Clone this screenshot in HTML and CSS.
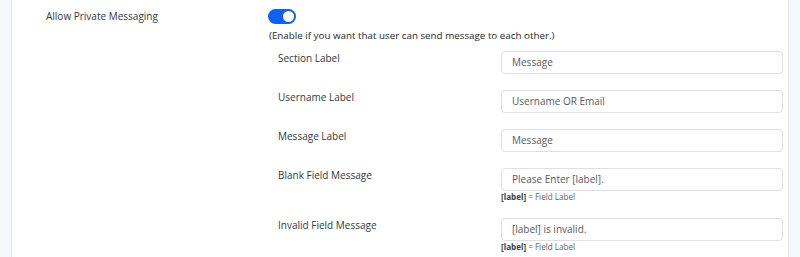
FILE: index.html
```html
<!DOCTYPE html>
<html>
<head>
<meta charset="utf-8">
<link rel="stylesheet" href="styles.css">
</head>
<body>
<div class="card">
  <div class="main-row">
    <div class="main-label">Allow Private Messaging</div>
    <div class="control">
      <span class="toggle"><span class="knob"></span></span>
      <p class="help">(Enable if you want that user can send message to each other.)</p>
      <div class="fields">
        <div class="field">
          <div class="flabel">Section Label</div>
          <div class="fcontrol"><div class="input">Message</div></div>
        </div>
        <div class="field">
          <div class="flabel">Username Label</div>
          <div class="fcontrol"><div class="input">Username OR Email</div></div>
        </div>
        <div class="field">
          <div class="flabel">Message Label</div>
          <div class="fcontrol"><div class="input">Message</div></div>
        </div>
        <div class="field">
          <div class="flabel">Blank Field Message</div>
          <div class="fcontrol"><div class="input">Please Enter [label].</div><div class="hint"><b>[label]</b> = Field Label</div></div>
        </div>
        <div class="field">
          <div class="flabel">Invalid Field Message</div>
          <div class="fcontrol"><div class="input">[label] is invalid.</div><div class="hint"><b>[label]</b> = Field Label</div></div>
        </div>
      </div>
    </div>
  </div>
</div>
</body>
</html>
```

FILE: styles.css
```css
html, body {
  margin: 0;
  padding: 0;
  height: 257px;
  overflow: hidden;
  background: #f5f8fc;
  font-family: "Open Sans", "Liberation Sans", sans-serif;
  color: #3a3f45;
}
.card {
  margin: 0 11px 0 11px;
  height: 257px;
  background: #ffffff;
  border-left: 1px solid #e2e6ed;
  border-right: 1px solid #e2e6ed;
  box-sizing: border-box;
}
.main-row {
  display: grid;
  grid-template-columns: 222px 1fr;
  padding: 9px 5px 0 34px;
}
.main-label {
  font-size: 10px;
  line-height: 15px;
  color: #33383e;
}
.control {
  display: flex;
  flex-direction: column;
  align-items: flex-start;
}
.toggle {
  display: block;
  width: 28px;
  height: 15px;
  border-radius: 8px;
  background: #1160ee;
  position: relative;
}
.knob {
  position: absolute;
  right: 2px;
  top: 2px;
  width: 11px;
  height: 11px;
  border-radius: 50%;
  background: #fff;
}
.help {
  margin: 5px 0 0 1px;
  font-size: 9.8px;
  line-height: 14px;
  color: #23272b;
}
.fields {
  align-self: stretch;
  display: flex;
  flex-direction: column;
  gap: 16px;
  margin-top: 8px;
  padding-left: 10px;
}
.field {
  display: grid;
  grid-template-columns: 223px 282px;
}
.flabel {
  font-size: 10px;
  line-height: 15px;
  color: #33383e;
}
.input {
  height: 23px;
  box-sizing: border-box;
  border: 1px solid #dcdfe4;
  border-radius: 4px;
  padding: 0 10px;
  font-size: 10px;
  line-height: 21px;
  color: #555a60;
  background: #fff;
}
.hint {
  margin-top: 1px;
  font-size: 8.1px;
  line-height: 10px;
  color: #60656b;
}
.hint b {
  color: #3a3f45;
}
```
